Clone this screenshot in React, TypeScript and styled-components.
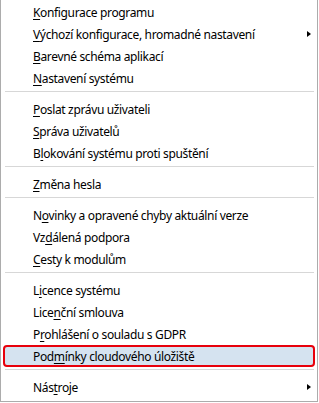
import * as React from 'react';
import styled, { createGlobalStyle } from 'styled-components';

const GlobalStyle = createGlobalStyle`
  html, body {
    margin: 0;
    padding: 0;
    background: #ffffff;
  }
`;

const Menu = styled.div`
  box-sizing: border-box;
  width: 318px;
  background: #ffffff;
  border: 1px solid #acacac;
  border-top: none;
  padding: 1px 0 3px 0;
  font: 12px 'Noto Sans', 'Open Sans', sans-serif;
  letter-spacing: -0.35px;
  color: #000000;
`;

const Item = styled.div<{ $active?: boolean }>`
  box-sizing: border-box;
  display: flex;
  align-items: center;
  height: 22px;
  padding: 0 6px 0 32px;
  white-space: nowrap;
  cursor: default;
  ${(p) =>
    p.$active &&
    `
    margin: 0 2px;
    padding: 0 4px 0 28px;
    border: 2px solid #e8000b;
    border-radius: 4px;
    background: #d5e3f0;
  `}
`;

const Label = styled.span`
  flex: 1;
`;

const Key = styled.span`
  text-decoration: underline;
  text-underline-offset: 2px;
`;

const Arrow = styled.span`
  width: 0;
  height: 0;
  border-top: 3.5px solid transparent;
  border-bottom: 3.5px solid transparent;
  border-left: 4px solid #000000;
`;

const Separator = styled.div`
  height: 1px;
  margin: 2px 3px 6px 4px;
  background: #d7d7d7;
`;

type Entry = { pre: string; key: string; post: string; sub?: boolean; active?: boolean } | 'sep';

const entries: Entry[] = [
  { pre: '', key: 'K', post: 'onfigurace programu' },
  { pre: '', key: 'V', post: 'ýchozí konfigurace, hromadné nastavení', sub: true },
  { pre: '', key: 'B', post: 'arevné schéma aplikací' },
  { pre: '', key: 'N', post: 'astavení systému' },
  'sep',
  { pre: '', key: 'P', post: 'oslat zprávu uživateli' },
  { pre: '', key: 'S', post: 'práva uživatelů' },
  { pre: 'B', key: 'l', post: 'okování systému proti spuštění' },
  'sep',
  { pre: '', key: 'Z', post: 'měna hesla' },
  'sep',
  { pre: 'N', key: 'o', post: 'vinky a opravené chyby aktuální verze' },
  { pre: 'Vz', key: 'd', post: 'álená podpora' },
  { pre: '', key: 'C', post: 'esty k modulům' },
  'sep',
  { pre: 'L', key: 'i', post: 'cence systému' },
  { pre: 'Lice', key: 'n', post: 'ční smlouva' },
  { pre: 'P', key: 'r', post: 'ohlášení o souladu s GDPR' },
  { pre: 'Pod', key: 'm', post: 'ínky cloudového úložiště', active: true },
  'sep',
  { pre: 'Nás', key: 't', post: 'roje', sub: true },
];

const App = () => (
  <>
    <GlobalStyle />
    <Menu>
      {entries.map((e, i) =>
        e === 'sep' ? (
          <Separator key={i} />
        ) : (
          <Item key={i} $active={e.active}>
            <Label>
              {e.pre}
              <Key>{e.key}</Key>
              {e.post}
            </Label>
            {e.sub && <Arrow />}
          </Item>
        )
      )}
    </Menu>
  </>
);

export default App;
